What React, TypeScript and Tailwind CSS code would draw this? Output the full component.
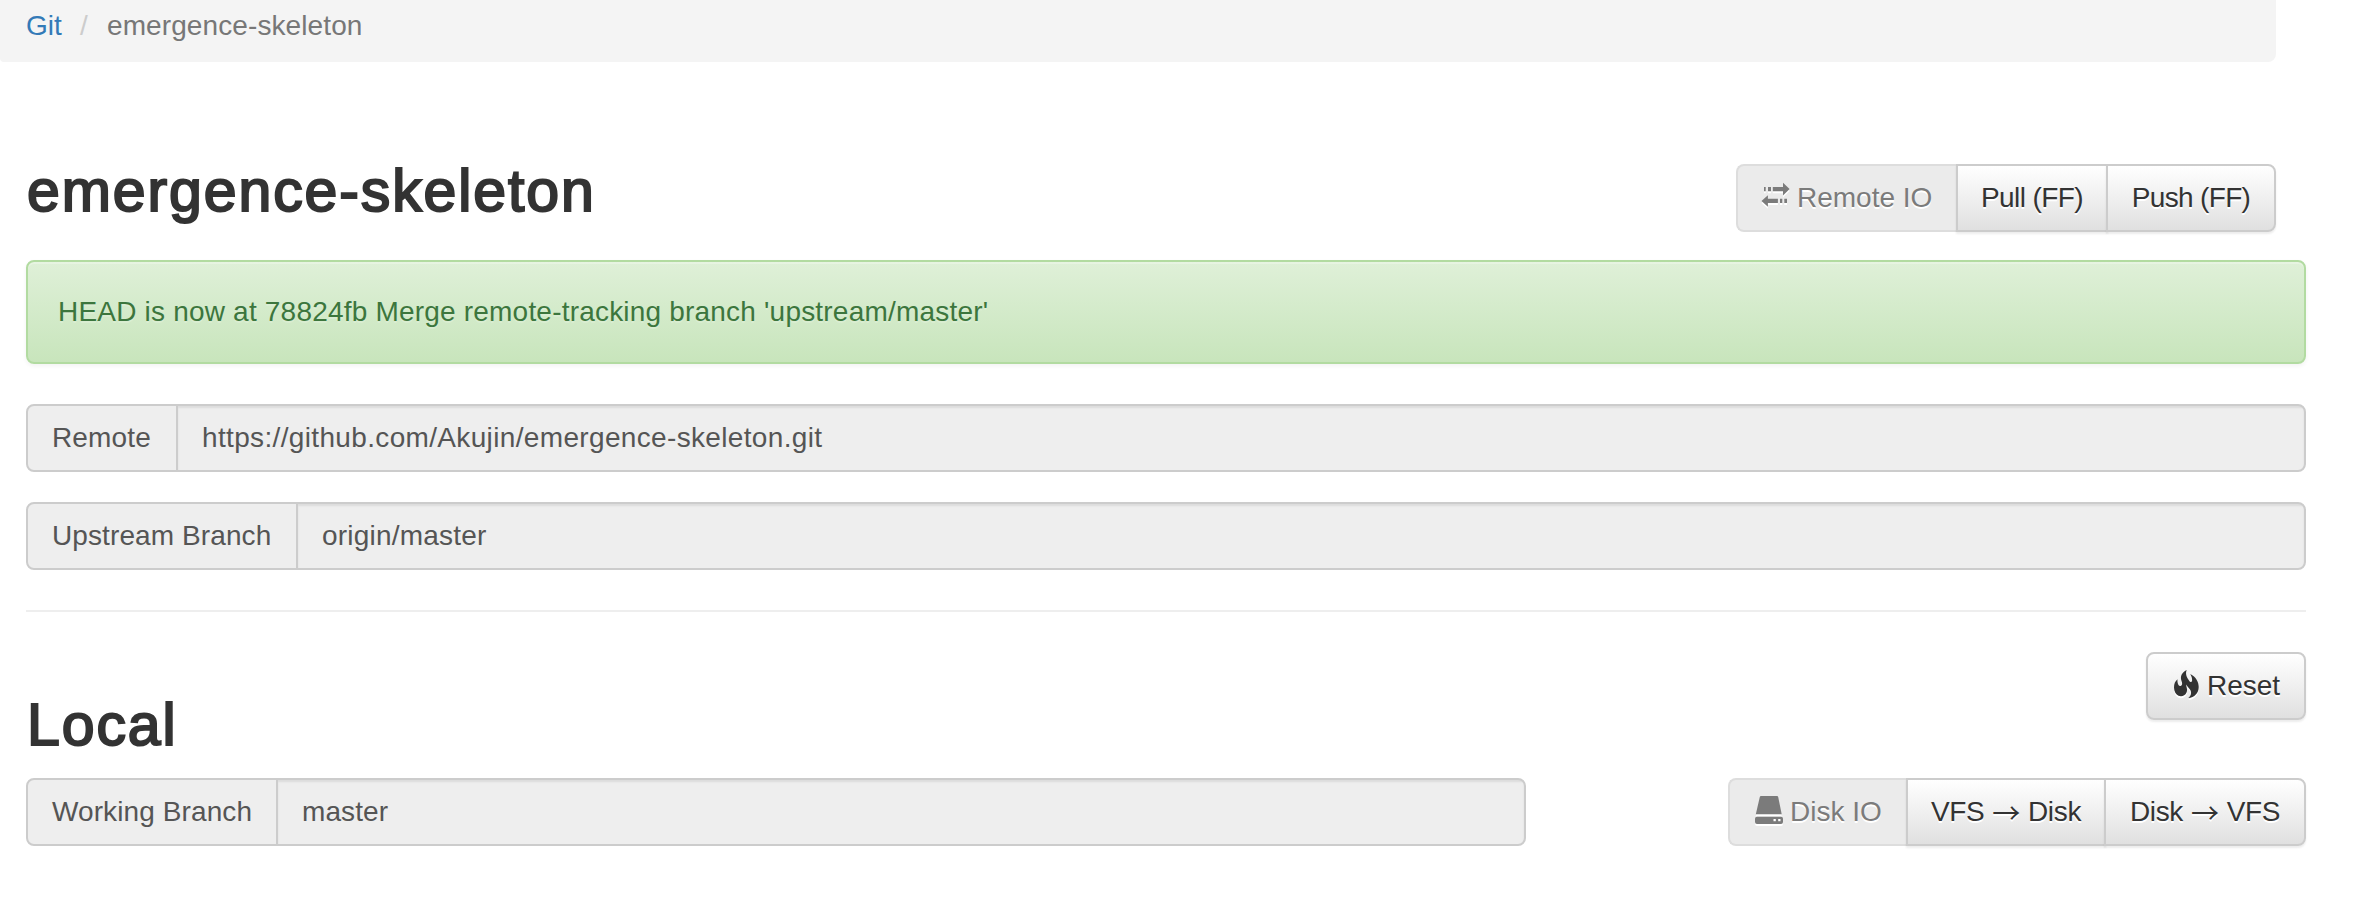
import React from "react";

const shadowBtn =
  "shadow-[inset_0_2px_0_rgba(255,255,255,0.15),0_2px_2px_rgba(0,0,0,0.075)]";

const headingText =
  "pl-px text-[59px] leading-[66px] font-normal tracking-[1.9px] [-webkit-text-stroke:2.1px_#333]";

function TransferIcon() {
  return (
    <svg width="30" height="26" viewBox="0 0 30 26" fill="currentColor" className="mt-[-6px] -ml-[2px] shrink-0 drop-shadow-[0_2px_0_#fff]">
      <path d="M4 5h1.700v4.200H4zM8 5h3v4.200H8zM12.800 5h10.200V0.700l6.600 6.400-6.600 6.400V9.200H12.800z" />
      <path d="M27 16.700h-2.700v4.200H27zM22.300 16.700h-2.300v4.200h2.300zM17.900 16.700H7.900V13.200L1.500 18.900l6.400 5.800v-3.800h10z" />
    </svg>
  );
}

function FireIcon() {
  return (
    <svg width="25" height="28" viewBox="0 0 25 28" fill="currentColor" className="-mt-[5px] shrink-0 overflow-visible drop-shadow-[0_2px_0_#fff]">
      <path d="M12.700 0C11 4 13 7.500 15 10.500C16.500 13 18.700 12.500 18 9C17.800 7 17 5.500 16.300 4C22 7 24.700 12 24.700 17C24.700 23 20.500 27.500 14.300 28C17.500 25.500 17.800 22.500 16 19.500C14.700 17.500 13 16.500 12.300 14.500C12 17 14 19.500 12.500 22.500C11 26 7.500 27 4.500 25.800C2 24.500 0 21.500 0 17.500C0 14 1 11.500 3.500 9.300C3.200 12 4 16 6 16C8.500 16 8.500 13.500 7.500 11C6 6.500 7.500 2.500 12.700 0z" />
    </svg>
  );
}

function DiskIcon() {
  return (
    <svg width="28" height="28" viewBox="0 0 28 28" fill="currentColor" className="-mt-[4px] ml-px shrink-0 overflow-visible drop-shadow-[0_2px_0_#fff]">
      <path d="M6 0h16q1 0 1.200 1l3.500 17.300H0.800L4.800 1q.2-1 1.200-1z" />
      <path fillRule="evenodd" d="M2 20.700h24q2 0 2 2v3.300q0 2-2 2H2q-2 0-2-2v-3.300q0-2 2-2zM18.500 23v2.300h2.300V23zM23.200 23v2.300h2.300V23z" />
    </svg>
  );
}

function Arrow() {
  return <span className="mx-[8px] font-['Noto_Sans_CJK_JP',sans-serif] leading-none">→</span>;
}

function Field({
  label,
  value,
  className,
  labelClass,
  valueClass,
}: {
  label: string;
  value: string;
  className: string;
  labelClass: string;
  valueClass: string;
}) {
  return (
    <div className={`flex h-[68px] overflow-hidden rounded-lg border-2 border-[#ccc] bg-[#eee] leading-[64px] text-[#555] ${className}`}>
      <div className={`shrink-0 border-r-2 border-[#ccc] pl-6 ${labelClass}`}>{label}</div>
      <div className={`flex-1 pl-6 shadow-[inset_0_2px_2px_rgba(0,0,0,0.075)] ${valueClass}`}>{value}</div>
    </div>
  );
}

function Button({ className, children }: { className: string; children: React.ReactNode }) {
  return (
    <button
      className={`flex h-[68px] items-center justify-center border-2 border-[#ccc] bg-linear-to-b from-white to-[#e0e0e0] text-[#333] [text-shadow:0_2px_0_#fff] ${shadowBtn} ${className}`}
    >
      {children}
    </button>
  );
}

function DisabledButton({ className, children }: { className: string; children: React.ReactNode }) {
  return (
    <button
      disabled
      className={`flex h-[68px] items-center rounded-l-lg border-2 border-r-0 border-[#ddd] bg-[#ebebeb] pl-6 text-[#7b7b7b] [text-shadow:0_2px_0_#fff] ${className}`}
    >
      {children}
    </button>
  );
}

export default function App() {
  return (
    <div className="h-[918px] w-[2354px] overflow-hidden bg-white font-['Liberation_Sans',Arial,sans-serif] text-[28px] leading-10 whitespace-nowrap text-[#333]">
      <nav className="flex h-[62px] w-[2276px] rounded-br-lg rounded-bl-[4px] bg-[#f4f4f4] pt-[6px] pl-[26px]">
        <a className="w-[54px] text-[#337ab7]">Git</a>
        <span className="w-[27px] text-[#ccc]">/</span>
        <span className="tracking-[0.1px] text-[#777]">emergence-skeleton</span>
      </nav>

      <main className="ml-[26px] w-[2280px]">
        <header className="flex h-[198px] justify-between pt-[102px] pr-[30px]">
          <h1 className={`-mt-[6px] ${headingText}`}>emergence-skeleton</h1>
          <div className="flex">
            <DisabledButton className="w-[220px]">
              <TransferIcon />
              <span className="ml-[7px]">Remote IO</span>
            </DisabledButton>
            <Button className="w-[152px] tracking-[-0.6px]">Pull (FF)</Button>
            <Button className="-ml-[2px] w-[170px] rounded-r-lg tracking-[-0.65px]">Push (FF)</Button>
          </div>
        </header>

        <div className="h-[104px] rounded-lg border-2 border-[#b2dba1] bg-linear-to-b from-[#dff0d8] to-[#c8e5bc] pt-[30px] pl-[30px] tracking-[0.2px] text-[#3c763d] shadow-[inset_0_2px_0_rgba(255,255,255,0.25),0_2px_4px_rgba(0,0,0,0.05)] [text-shadow:0_2px_0_rgba(255,255,255,0.2)]">
          HEAD is now at 78824fb Merge remote-tracking branch 'upstream/master'
        </div>

        <Field className="mt-10" label="Remote" value="https://github.com/Akujin/emergence-skeleton.git" labelClass="w-[150px] tracking-[0.15px]" valueClass="tracking-[0.345px]" />
        <Field className="mt-[30px]" label="Upstream Branch" value="origin/master" labelClass="w-[270px] tracking-[0.1px]" valueClass="tracking-[0.2px]" />

        <hr className="mt-10 border-t-2 border-[#eee]" />

        <section className="flex h-[166px] justify-between pt-10">
          <h2 className={`mt-[40px] ${headingText}`}>Local</h2>
          <Button className="w-[160px] rounded-lg pl-[2px]">
            <FireIcon />
            <span className="ml-[8px]">Reset</span>
          </Button>
        </section>

        <div className="flex justify-between">
          <Field className="w-[1500px]" label="Working Branch" value="master" labelClass="w-[250px] tracking-[0.1px]" valueClass="tracking-[0.1px]" />
          <div className="flex">
            <DisabledButton className="w-[178px]">
              <DiskIcon />
              <span className="ml-[7px]">Disk IO</span>
            </DisabledButton>
            <Button className="w-[200px] tracking-[-0.35px]">VFS<Arrow />Disk</Button>
            <Button className="-ml-[2px] w-[202px] rounded-r-lg tracking-[-0.35px]">Disk<Arrow />VFS</Button>
          </div>
        </div>
      </main>
    </div>
  );
}
